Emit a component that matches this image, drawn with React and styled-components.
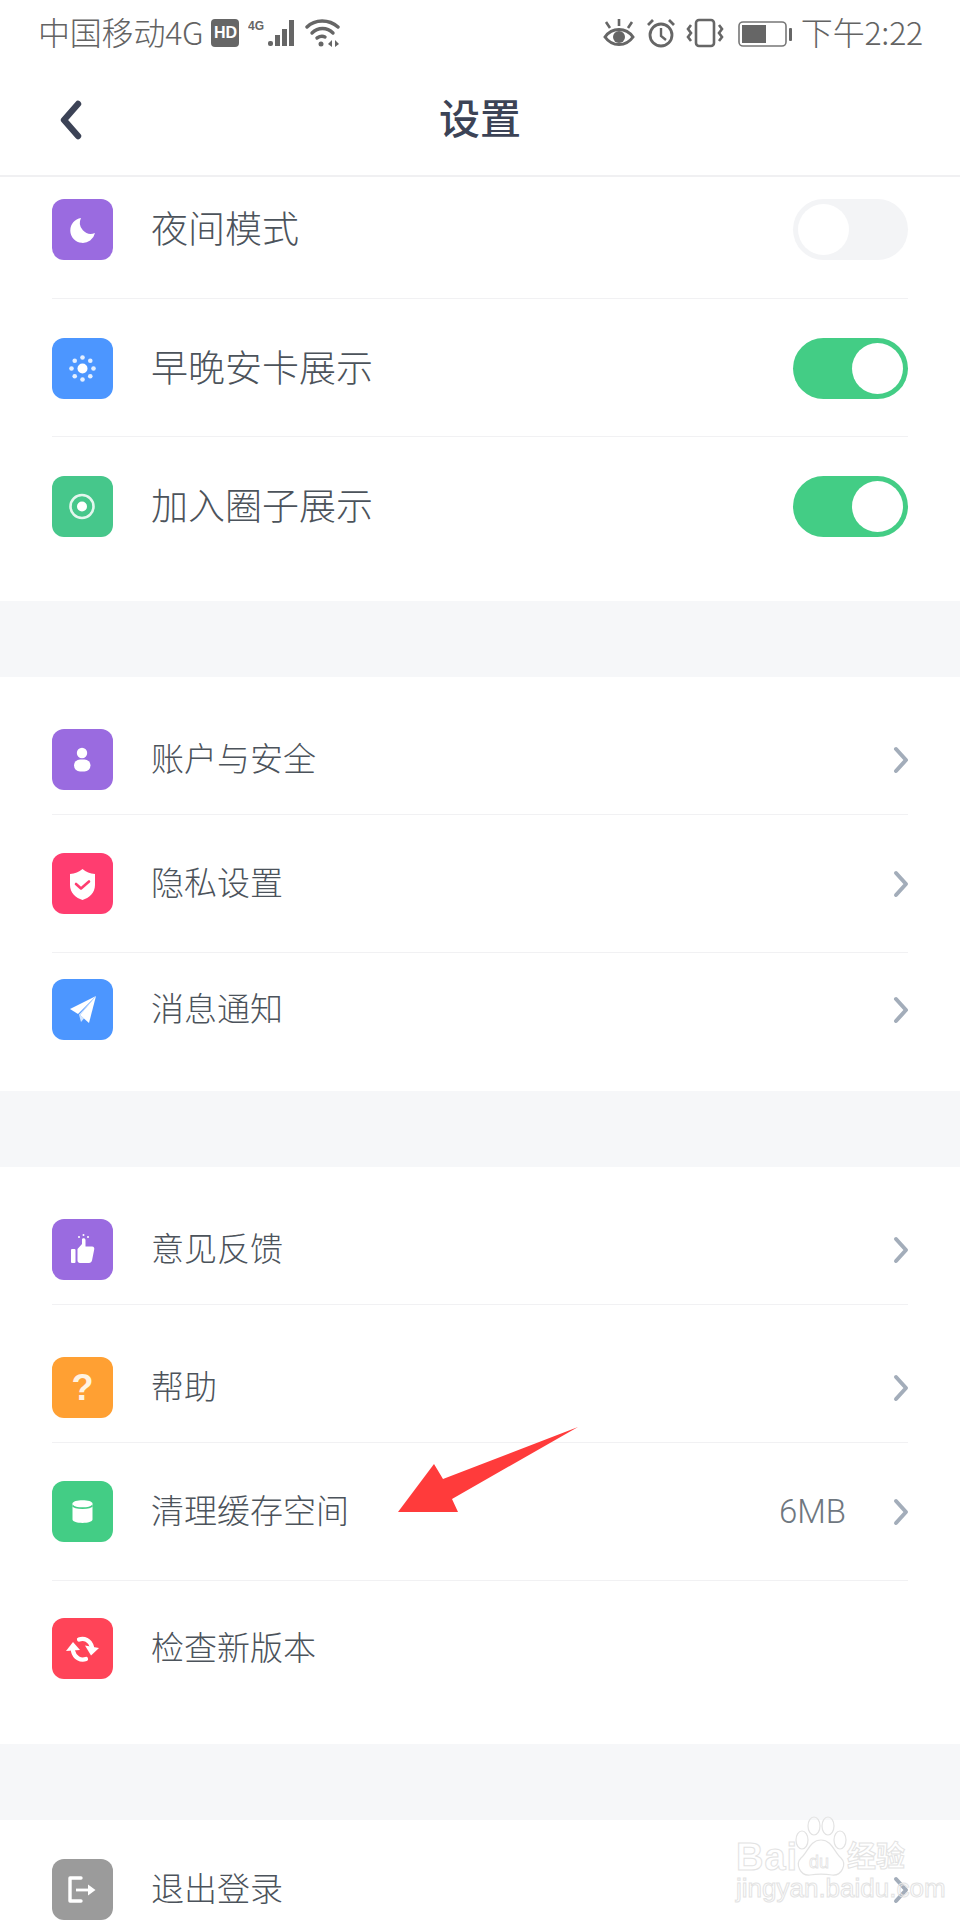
import React from 'react';
import styled, { createGlobalStyle } from 'styled-components';

const GlobalStyle = createGlobalStyle`
  html, body {
    margin: 0;
    padding: 0;
    background: #fff;
  }
`;

const cjk = `"Noto Sans CJK SC", "Noto Sans", sans-serif`;

const Page = styled.div`
  position: relative;
  width: 960px;
  height: 1920px;
  overflow: hidden;
  background: #fff;
  font-family: ${cjk};
`;

const StatusBar = styled.div`
  height: 66px;
  box-sizing: border-box;
  padding: 0 37px 0 38px;
  display: flex;
  align-items: center;
  justify-content: space-between;
  color: #636363;
`;

const StatusGroup = styled.div`
  display: flex;
  align-items: center;
`;

const StatusText = styled.span`
  margin-left: ${p => p.$gap || 0}px;
  margin-bottom: 4px;
  font-size: 32px;
  font-weight: 300;
  line-height: 1;
  white-space: nowrap;
  letter-spacing: -0.2px;
`;

const StatusIcon = styled.svg`
  display: block;
  margin-left: ${p => p.$gap || 0}px;
  flex: none;
`;

const HdBadge = styled.span`
  margin-left: 8px;
  width: 28px;
  height: 28px;
  border-radius: 4px;
  background: #666;
  color: #fff;
  font: bold 16px/28px "Liberation Sans", sans-serif;
  text-align: center;
`;

const NavBar = styled.div`
  height: 109px;
  display: grid;
  grid-template-columns: 1fr auto 1fr;
  align-items: center;
  border-bottom: 2px solid #f0f0f2;
`;

const BackIcon = styled.svg`
  display: block;
  margin: 0 0 2px 58px;
`;

const Title = styled.div`
  margin-bottom: 9px;
  font-size: 41px;
  font-weight: 500;
  line-height: 1;
  color: #3c4356;
`;

const Section = styled.section`
  background: #fff;
`;

const Gap = styled.div`
  height: 76px;
  background: #f6f7f9;
`;

const Row = styled.div`
  margin: 0 52px;
  padding: ${p => p.$top}px 0 ${p => p.$bottom}px;
  display: flex;
  align-items: center;
  border-bottom: ${p => (p.$divider ? '1px solid #f1f1f3' : 'none')};
`;

const Tile = styled.div`
  width: 61px;
  height: 61px;
  flex: none;
  border-radius: 12px;
  background: ${p => p.$color};
  display: flex;
  align-items: center;
  justify-content: center;
  color: #fff;
`;

const TileGlyph = styled.span`
  font: bold 36px/1 "Liberation Sans", sans-serif;
  color: #fff3e2;
`;

const Label = styled.span`
  margin: 0 auto 4px 38px;
  font-size: ${p => (p.$large ? 37 : 33)}px;
  font-weight: 300;
  line-height: 1;
  color: #4c535b;
`;

const Extra = styled.span`
  font-family: Roboto, "Liberation Sans", sans-serif;
  font-size: 33px;
  font-weight: 300;
  line-height: 1;
  color: #6f777f;
  margin-right: 47px;
`;

const Chevron = styled.svg`
  display: block;
  flex: none;
  margin-right: -1px;
`;

const Switch = styled.div`
  width: 115px;
  height: 61px;
  box-sizing: border-box;
  padding: 5px;
  border-radius: 31px;
  display: flex;
  justify-content: ${p => (p.$on ? 'flex-end' : 'flex-start')};
  background: ${p => (p.$on ? '#43cd85' : '#f3f4f6')};
`;

const Knob = styled.div`
  width: 51px;
  height: 51px;
  border-radius: 50%;
  background: #fff;
`;

const ArrowMark = styled.svg`
  position: absolute;
  left: 390px;
  top: 1420px;
`;

const Watermark = styled.div`
  position: absolute;
  left: 736px;
  top: 1816px;
  width: 180px;
  height: 90px;
  color: transparent;
  -webkit-text-stroke: 1px #e3e3e3;
`;

const MarkBai = styled.span`
  position: absolute;
  left: 0;
  top: 22px;
  font: bold 38px/1 "Liberation Sans", sans-serif;
  letter-spacing: 1px;
`;

const MarkPaw = styled.svg`
  position: absolute;
  left: 58px;
  top: 0;
`;

const MarkJy = styled.span`
  position: absolute;
  left: 111px;
  top: 24px;
  font: bold 29px/1 ${cjk};
`;

const MarkUrl = styled.span`
  position: absolute;
  left: 0;
  top: 59px;
  font: 26px/1 "Liberation Sans", sans-serif;
  white-space: nowrap;
`;

const Glyph = ({ children }) => (
  <svg width="61" height="61" viewBox="0 0 61 61" fill="#fff">{children}</svg>
);

const icons = {
  moon: <Glyph><path d="M29 19 A12.5 12.5 0 1 0 43 34 A11 11 0 0 1 29 19 Z" /></Glyph>,
  sun: (
    <Glyph>
      <circle cx="30.5" cy="30.5" r="5" />
      {[0, 45, 90, 135, 180, 225, 270, 315].map(a => (
        <circle
          key={a}
          cx={30.5 + 11 * Math.cos((a * Math.PI) / 180)}
          cy={30.5 + 11 * Math.sin((a * Math.PI) / 180)}
          r="2.3"
          opacity="0.85"
        />
      ))}
    </Glyph>
  ),
  target: (
    <Glyph>
      <circle cx="30" cy="30.5" r="11.5" fill="none" stroke="#fff" strokeWidth="2.6" opacity="0.85" />
      <circle cx="30" cy="30.5" r="5" />
    </Glyph>
  ),
  person: (
    <Glyph>
      <circle cx="30" cy="24" r="5.2" />
      <rect x="22" y="30.5" width="16.5" height="12" rx="6" />
    </Glyph>
  ),
  shield: (
    <Glyph>
      <path d="M30.5 16 C34 19 38 20.5 43 21 V32 C43 40 37 45 30.5 47 C24 45 18 40 18 32 V21 C23 20.5 27 19 30.5 16 Z" />
      <path d="M24 31 L29 35.5 L37 28.5" fill="none" stroke="#ff3d70" strokeWidth="2.6" strokeLinecap="round" strokeLinejoin="round" />
    </Glyph>
  ),
  plane: (
    <Glyph>
      <path d="M44 17 L18 30 L26 35 Z" />
      <path d="M44 17 L28 36 L37 44 Z" />
      <path d="M44 17 L27 35.5 L29 43 L32 39.5 L28 36 Z" opacity="0.75" />
    </Glyph>
  ),
  thumb: (
    <Glyph>
      <rect x="19" y="30" width="4.5" height="14" rx="1" />
      <path d="M25.5 30 L30 25 V20.5 C30 18.8 33.5 18.8 33.5 21 V27.5 H40 C42 27.5 42.6 29 42.2 30.5 L40 41.5 C39.6 43 38.6 44 37 44 H28 C26.5 44 25.5 43 25.5 41.5 Z" />
      <circle cx="27" cy="18" r="1" />
      <circle cx="31.5" cy="16" r="1" />
      <circle cx="36" cy="18" r="1" />
    </Glyph>
  ),
  database: (
    <Glyph>
      <path d="M20.5 22.5 C20.5 18 40.5 18 40.5 22.5 V38.5 C40.5 43 20.5 43 20.5 38.5 Z" />
      <path d="M20.5 24.5 C23 28 38 28 40.5 24.5" fill="none" stroke="#43cd85" strokeWidth="1.6" />
    </Glyph>
  ),
  refresh: (
    <Glyph>
      <path d="M27 21.5 C32 19.5 38 22 40 29" fill="none" stroke="#fff" strokeWidth="4.2" strokeLinecap="round" />
      <path d="M33 27.5 L47 30 L39 37.5 Z" />
      <path d="M34 41 C29 43 22.5 40 21 33" fill="none" stroke="#fff" strokeWidth="4.2" strokeLinecap="round" />
      <path d="M14 33 L28 32 L21 24 Z" />
    </Glyph>
  ),
  logout: (
    <Glyph>
      <path d="M29 19 H18 V42 H29" fill="none" stroke="#fff" strokeWidth="3.4" strokeLinecap="round" strokeLinejoin="round" />
      <path d="M24 31 H37" fill="none" stroke="#fff" strokeWidth="2.8" />
      <path d="M36 25.5 L43.5 31 L36 36.5 Z" />
    </Glyph>
  ),
};

const sections = [
  [
    { icon: 'moon', color: '#9a6be0', label: '夜间模式', toggle: 'off', top: 22, bottom: 38, divider: true },
    { icon: 'sun', color: '#4c96ff', label: '早晚安卡展示', toggle: 'on', top: 39, bottom: 37, divider: true },
    { icon: 'target', color: '#46c78b', label: '加入圈子展示', toggle: 'on', top: 39, bottom: 64 },
  ],
  [
    { icon: 'person', color: '#9a6be0', label: '账户与安全', top: 52, bottom: 24, divider: true },
    { icon: 'shield', color: '#ff3d70', label: '隐私设置', top: 38, bottom: 38, divider: true },
    { icon: 'plane', color: '#4c96ff', label: '消息通知', top: 26, bottom: 51 },
  ],
  [
    { icon: 'thumb', color: '#9a6be0', label: '意见反馈', top: 52, bottom: 24, divider: true },
    { icon: 'help', color: '#ffa033', label: '帮助', top: 52, bottom: 24, divider: true },
    { icon: 'database', color: '#43cd85', label: '清理缓存空间', extra: '6MB', top: 38, bottom: 38, divider: true },
    { icon: 'refresh', color: '#ff4458', label: '检查新版本', bare: true, top: 37, bottom: 65 },
  ],
  [
    { icon: 'logout', color: '#9b9b9b', label: '退出登录', top: 39, bottom: 0 },
  ],
];

const RowChevron = () => (
  <Chevron width="16" height="28" viewBox="0 0 16 28">
    <path d="M3 3 L13 14 L3 25" fill="none" stroke="#a3adba" strokeWidth="4" strokeLinecap="round" strokeLinejoin="round" />
  </Chevron>
);

const SettingRow = ({ item }) => (
  <Row $top={item.top} $bottom={item.bottom} $divider={item.divider}>
    <Tile $color={item.color}>
      {item.icon === 'help' ? <TileGlyph>?</TileGlyph> : icons[item.icon]}
    </Tile>
    <Label $large={!!item.toggle}>{item.label}</Label>
    {item.extra && <Extra>{item.extra}</Extra>}
    {item.toggle ? (
      <Switch $on={item.toggle === 'on'}><Knob /></Switch>
    ) : (
      !item.bare && <RowChevron />
    )}
  </Row>
);

const App = () => (
  <Page>
    <GlobalStyle />
    <StatusBar>
      <StatusGroup>
        <StatusText>中国移动4G</StatusText>
        <HdBadge>HD</HdBadge>
        <StatusIcon $gap={9} width="48" height="30" viewBox="0 0 48 30" fill="#666">
          <text x="0" y="12" fontFamily="Liberation Sans" fontWeight="bold" fontSize="12">4G</text>
          <rect x="20" y="23" width="5" height="5" rx="2" />
          <rect x="27" y="17" width="5" height="11" />
          <rect x="34" y="11" width="5" height="17" />
          <rect x="41" y="2" width="5" height="26" />
        </StatusIcon>
        <StatusIcon $gap={9} width="36" height="30" viewBox="0 0 36 30" fill="none" stroke="#666" strokeWidth="3.4" strokeLinecap="round">
          <path d="M2 9 C10 1 24 1 33 9" />
          <path d="M7 15 C13 9 22 9 28 15" />
          <path d="M12 20 C15 18 18 18 20 19" />
          <circle cx="16" cy="26" r="2.5" fill="#666" stroke="none" />
          <path d="M23 26 L27 22 V29 Z M30 22 L34 26 L30 29 Z" fill="#666" stroke="none" />
        </StatusIcon>
      </StatusGroup>
      <StatusGroup>
        <StatusIcon width="32" height="30" viewBox="0 0 32 30" fill="none" stroke="#666" strokeWidth="3">
          <path d="M2 19 C9 9 23 9 30 19 C23 29 9 29 2 19 Z" />
          <circle cx="16" cy="19" r="6" fill="#666" stroke="none" />
          <path d="M3 4 L7 10 M16 1 V8 M29 4 L25 10" strokeWidth="2.6" />
        </StatusIcon>
        <StatusIcon $gap={11} width="30" height="30" viewBox="0 0 30 30" fill="none" stroke="#666" strokeWidth="2.8">
          <circle cx="15" cy="17" r="11" />
          <path d="M15 10 V18 L20 22" strokeWidth="2.4" />
          <path d="M2 7 L7 2 M23 2 L28 7" />
        </StatusIcon>
        <StatusIcon $gap={10} width="38" height="30" viewBox="0 0 38 30" fill="none" stroke="#666" strokeWidth="2.6">
          <rect x="10" y="2" width="18" height="26" rx="3" />
          <path d="M5 7 L2 11 L5 15 L2 19 L5 23 M33 7 L36 11 L33 15 L36 19 L33 23" />
        </StatusIcon>
        <StatusIcon $gap={14} width="54" height="30" viewBox="0 0 54 30">
          <rect x="1" y="4" width="47" height="24" rx="4" fill="none" stroke="#777" strokeWidth="1.6" />
          <rect x="4" y="7" width="24" height="18" fill="#666" />
          <rect x="51" y="10" width="3" height="13" rx="1" fill="#666" />
        </StatusIcon>
        <StatusText $gap={9}>下午2:22</StatusText>
      </StatusGroup>
    </StatusBar>

    <NavBar>
      <BackIcon width="24" height="40" viewBox="0 0 24 40">
        <path d="M20 4 L6 20 L20 36" fill="none" stroke="#3c4356" strokeWidth="6.4" strokeLinecap="round" strokeLinejoin="round" />
      </BackIcon>
      <Title>设置</Title>
    </NavBar>

    {sections.map((rows, i) => (
      <React.Fragment key={i}>
        {i > 0 && <Gap />}
        <Section>
          {rows.map(item => <SettingRow key={item.label} item={item} />)}
        </Section>
      </React.Fragment>
    ))}

    <ArrowMark width="190" height="95" viewBox="0 0 190 95">
      <polygon points="188,7 53,59 44,44 8,92 68,92 62,79" fill="#ff3b3b" />
    </ArrowMark>

    <Watermark>
      <MarkBai>Bai</MarkBai>
      <MarkPaw width="54" height="66" viewBox="0 0 54 66" fill="none" stroke="#e3e3e3" strokeWidth="1.2">
        <ellipse cx="8" cy="24" rx="6" ry="9" />
        <ellipse cx="20" cy="10" rx="6" ry="9" />
        <ellipse cx="34" cy="10" rx="6" ry="9" />
        <ellipse cx="46" cy="24" rx="6" ry="9" />
        <path d="M27 24 C16 24 14 36 7 42 C1 48 6 60 16 59 C22 58 32 58 38 59 C48 60 53 48 47 42 C40 36 38 24 27 24 Z" />
        <text x="15" y="52" fontFamily="Liberation Sans" fontSize="18" stroke="#e3e3e3" strokeWidth="0.8">du</text>
      </MarkPaw>
      <MarkJy>经验</MarkJy>
      <MarkUrl>jingyan.baidu.com</MarkUrl>
    </Watermark>
  </Page>
);

export default App;
